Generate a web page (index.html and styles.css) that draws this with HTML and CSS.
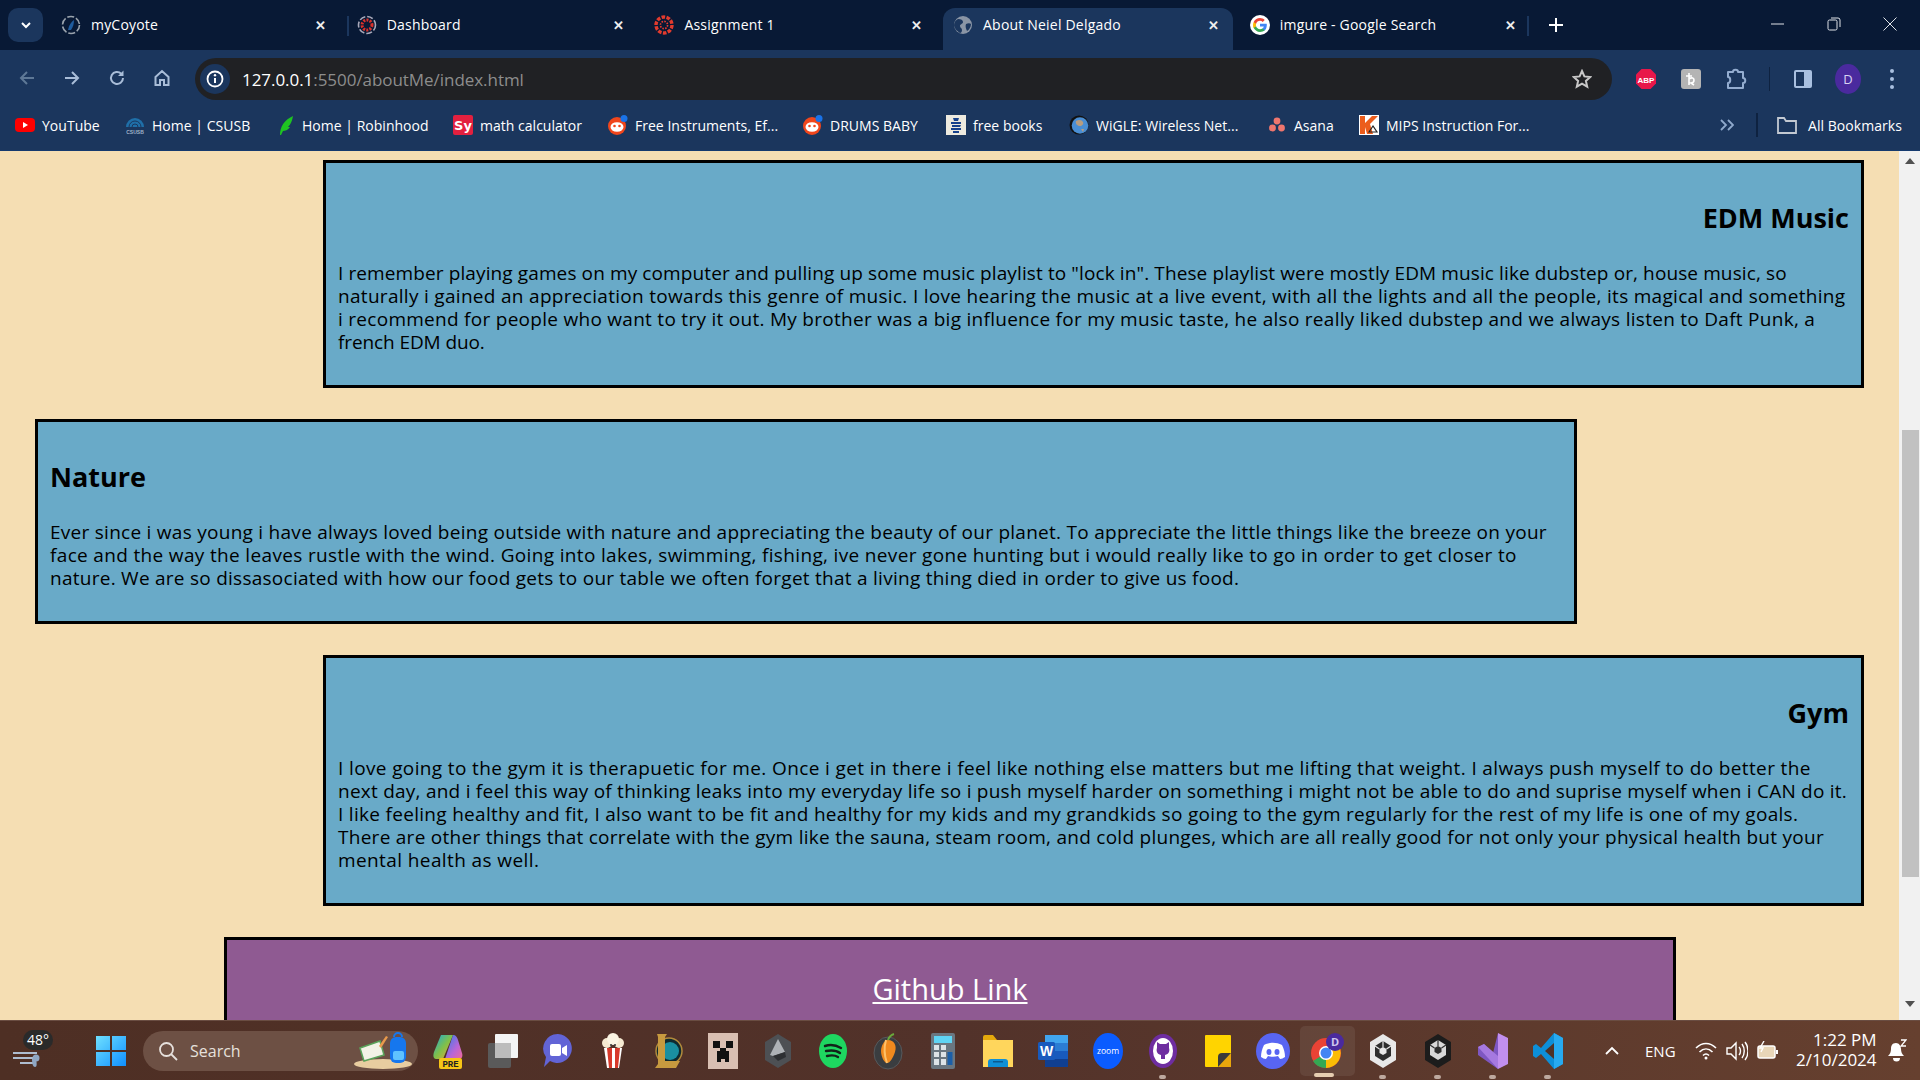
FILE: index.html
```html
<!DOCTYPE html>
<html lang="en">
<head>
<meta charset="utf-8">
<title>About Neiel Delgado</title>
<link rel="stylesheet" href="styles.css">
</head>
<body>
<div class="screen">
  <header class="chrome">
    <div class="tabstrip">
      <div class="tabmenu"><svg width="12" height="12" viewBox="0 0 12 12"><path d="M2 4l4 4 4-4" fill="none" stroke="#fff" stroke-width="2"/></svg></div>
      <div class="tab">
        <svg class="fav" viewBox="0 0 20 20"><circle cx="10" cy="10" r="8.5" fill="none" stroke="#9aa3ad" stroke-width="1.6" stroke-dasharray="7 2"/><path d="M7 15c1-5 3-8 6-10 0 4-1 7-3 10z" fill="#1f5c9e"/></svg>
        <span class="tabtitle">myCoyote</span><span class="tabx">✕</span>
      </div>
      <div class="tab sep">
        <svg class="fav" viewBox="0 0 20 20"><circle cx="10" cy="10" r="8.5" fill="none" stroke="#aab" stroke-width="1.6" stroke-dasharray="6 2"/><circle cx="10" cy="10" r="5" fill="none" stroke="#d9312b" stroke-width="3" stroke-dasharray="2 1.2"/></svg>
        <span class="tabtitle">Dashboard</span><span class="tabx">✕</span>
      </div>
      <div class="tab third">
        <svg class="fav" viewBox="0 0 20 20"><circle cx="10" cy="10" r="8" fill="none" stroke="#e23b2e" stroke-width="3.4" stroke-dasharray="3.6 1.4"/><circle cx="10" cy="10" r="3.6" fill="none" stroke="#e23b2e" stroke-width="1.6" stroke-dasharray="1.6 1.2"/></svg>
        <span class="tabtitle">Assignment 1</span><span class="tabx">✕</span>
      </div>
      <div class="tab active">
        <svg class="fav" viewBox="0 0 20 20"><circle cx="10" cy="10" r="9" fill="#8a95a5"/><path d="M5 4c3 0 5 1 5 3s-3 2-3 4 2 2 2 4-1 3-2 3C4 16 1 13 1 10c0-3 2-5 4-6zM13 9c2-1 4-1 5 0 0 3-2 6-4 7-1-2-2-5-1-7z" fill="#1b365d"/></svg>
        <span class="tabtitle">About Neiel Delgado</span><span class="tabx">✕</span>
      </div>
      <div class="tab">
        <svg class="fav" viewBox="0 0 20 20"><circle cx="10" cy="10" r="10" fill="#fff"/><path d="M16.8 10.2c0-.5 0-1-.1-1.4H10v2.7h3.8c-.2.9-.7 1.6-1.4 2.1v1.8h2.3c1.3-1.2 2.1-3 2.1-5.2z" fill="#4285f4"/><path d="M10 17c1.900 0 3.500-.6 4.700-1.700l-2.300-1.800c-.6.4-1.400.7-2.400.7-1.800 0-3.400-1.200-3.900-2.900H3.700v1.800C4.900 15.500 7.300 17 10 17z" fill="#34a853"/><path d="M6.100 11.300c-.3-.8-.3-1.800 0-2.600V6.900H3.700c-.9 1.900-.9 4.300 0 6.200z" fill="#fbbc05"/><path d="M10 5.800c1 0 2 .4 2.700 1.100l2-2C13.500 3.700 11.800 3 10 3 7.300 3 4.900 4.500 3.700 6.900l2.400 1.800C6.600 7 8.200 5.800 10 5.800z" fill="#ea4335"/></svg>
        <span class="tabtitle">imgure - Google Search</span><span class="tabx">✕</span>
      </div>
      <div class="newtab"><svg width="14" height="14" viewBox="0 0 14 14"><path d="M7 0v14M0 7h14" stroke="#fff" stroke-width="2"/></svg></div>
      <div class="winctl">
        <svg class="winbtn" width="14" height="14" viewBox="0 0 14 14"><path d="M0 7h13" stroke="#dfe3e8" stroke-width="1"/></svg>
        <svg class="winbtn" width="14" height="14" viewBox="0 0 14 14"><rect x="1" y="3" width="9" height="10" rx="1.500" fill="none" stroke="#dfe3e8"/><path d="M4 1h7a2 2 0 0 1 2 2v7" fill="none" stroke="#dfe3e8"/></svg>
        <svg class="winbtn" width="14" height="14" viewBox="0 0 14 14"><path d="M.5.5l13 13M13.500.5l-13 13" stroke="#dfe3e8"/></svg>
      </div>
    </div>
    <div class="toolbar">
      <div class="navs">
        <svg width="18" height="18" viewBox="0 0 18 18"><path d="M16 9H3M9 3L3 9l6 6" fill="none" stroke="#5e7896" stroke-width="2"/></svg>
        <svg width="18" height="18" viewBox="0 0 18 18"><path d="M2 9h13M9 3l6 6-6 6" fill="none" stroke="#a9bdd8" stroke-width="2"/></svg>
        <svg width="18" height="18" viewBox="0 0 18 18"><path d="M15 9a6 6 0 1 1-1.800-4.300" fill="none" stroke="#a9bdd8" stroke-width="2"/><path d="M15.500 1.500v5.500H10z" fill="#a9bdd8"/></svg>
        <svg width="18" height="18" viewBox="0 0 18 18"><path d="M2.500 8L9 2l6.500 6v8h-4.500v-5h-4v5H2.500z" fill="none" stroke="#a9bdd8" stroke-width="2"/></svg>
      </div>
      <div class="omnibox">
        <div class="infochip"><svg width="18" height="18" viewBox="0 0 18 18"><circle cx="9" cy="9" r="7.500" fill="none" stroke="#fff" stroke-width="1.800"/><path d="M9 8v5" stroke="#fff" stroke-width="2"/><circle cx="9" cy="5.300" r="1.200" fill="#fff"/></svg></div>
        <span class="url"><span class="urlhost">127.0.0.1</span>:5500/aboutMe/index.html</span>
        <svg class="star" width="20" height="20" viewBox="0 0 20 20"><path d="M10 2l2.400 5.400 5.900.6-4.400 3.900 1.300 5.800L10 14.700l-5.200 3 1.300-5.800L1.700 8l5.900-.6z" fill="none" stroke="#c8c8c8" stroke-width="2"/></svg>
      </div>
      <div class="exts">
        <svg class="ext" width="22" height="22" viewBox="0 0 22 22"><path d="M6.500 1h9L21 6.500v9L15.500 21h-9L1 15.500v-9z" fill="#e8174a"/><text x="11" y="14.500" class="abp">ABP</text></svg>
        <svg class="ext" width="22" height="22" viewBox="0 0 22 22"><rect x="1" y="1" width="20" height="20" rx="3" fill="#b4b4b4"/><path d="M9 5v12M9 11c3-2 5-1 5 1s-1 3-3 3l3 2M6 8h6" fill="none" stroke="#fff" stroke-width="1.600"/></svg>
        <svg class="ext" width="22" height="22" viewBox="0 0 22 22"><path d="M3 4h5c0-3 5-3 5 0h5v6c3 0 3 5 0 5v5H3v-5c3 0 3-6 0-6z" fill="none" stroke="#94add0" stroke-width="2" stroke-linejoin="round"/></svg>
        <i class="toolsep"></i>
        <svg class="ext panel" width="20" height="20" viewBox="0 0 20 20"><rect x="1" y="1" width="18" height="18" rx="2" fill="#a9c0e0"/><rect x="3" y="3" width="8" height="14" fill="#1b365d"/></svg>
        <div class="avatar">D</div>
        <svg class="dots" width="6" height="22" viewBox="0 0 6 22"><circle cx="3" cy="3" r="2" fill="#a9c0e0"/><circle cx="3" cy="11" r="2" fill="#a9c0e0"/><circle cx="3" cy="19" r="2" fill="#a9c0e0"/></svg>
      </div>
    </div>
    <div class="bookmarks">
      <div class="bm"><svg class="bmi" viewBox="0 0 20 20"><rect y="3" width="20" height="14" rx="4" fill="#f00"/><path d="M8 7l5 3-5 3z" fill="#fff"/></svg><span>YouTube</span></div>
      <div class="bm"><svg class="bmi" viewBox="0 0 20 20"><path d="M1 12a9 9 0 0 1 18 0z" fill="#1f6fa8"/><path d="M4 12a6 6 0 0 1 12 0M7 12a3 3 0 0 1 6 0" fill="none" stroke="#1b365d"/><text x="10" y="19" class="csusb">CSUSB</text></svg><span>Home | CSUSB</span></div>
      <div class="bm tight"><svg class="bmi" viewBox="0 0 20 20"><path d="M3 20c0-8 4-15 13-19-1 5-2 8-5 11l2 0c-2 3-5 4-7 4l-2 4z" fill="#1fc422"/></svg><span>Home | Robinhood</span></div>
      <div class="bm"><svg class="bmi" viewBox="0 0 20 20"><rect width="20" height="20" rx="2" fill="#e3203f"/><text x="10" y="15" class="sy">Sy</text></svg><span>math calculator</span></div>
      <div class="bm"><svg class="bmi" viewBox="0 0 20 20"><use href="#reddit"/></svg><span>Free Instruments, Ef...</span></div>
      <div class="bm"><svg class="bmi" viewBox="0 0 20 20"><use href="#reddit"/></svg><span>DRUMS BABY</span></div>
      <div class="bm"><svg class="bmi" viewBox="0 0 20 20"><rect width="20" height="20" fill="#edeadf"/><path d="M7 3h6l-1 3H8zM5 7h10v2H5zM6 10h9l-1 2H6zM5 13h10v2H5zM7 16h6v2H7z" fill="#17418c"/></svg><span>free books</span></div>
      <div class="bm"><svg class="bmi" viewBox="0 0 20 20"><circle cx="10" cy="10" r="9.500" fill="#111"/><circle cx="11" cy="10.500" r="8.300" fill="#4a8ed3"/><path d="M7 6c3-2 6-1 7 1s-1 4-3 4-5-2-4-5zM12 14l3 0-1 3z" fill="#b79d80"/></svg><span>WiGLE: Wireless Net...</span></div>
      <div class="bm"><svg class="bmi" viewBox="0 0 20 20"><circle cx="10" cy="6" r="3.400" fill="#f0766e"/><circle cx="5.500" cy="13" r="3.400" fill="#f0766e"/><circle cx="14.500" cy="13" r="3.400" fill="#f0766e"/></svg><span>Asana</span></div>
      <div class="bm"><svg class="bmi" viewBox="0 0 20 20"><rect width="20" height="20" fill="#fff"/><path d="M1 1h5v7l7-7h6l-8 8 3 10H8L6 12v7H1z" fill="#ec5d1c"/><path d="M10 17l4-6 4 6z" fill="none" stroke="#222" stroke-width="1.200"/></svg><span>MIPS Instruction For...</span></div>
      <div class="bmend">
        <svg width="14" height="12" viewBox="0 0 14 12"><path d="M1 1l5 5-5 5M8 1l5 5-5 5" fill="none" stroke="#8fa9cc" stroke-width="1.800"/></svg>
        <i class="bmsep"></i>
        <svg width="20" height="18" viewBox="0 0 20 18"><path d="M1 2h6l2 3h10v12H1z" fill="none" stroke="#c3c9d2" stroke-width="1.800"/></svg>
        <span>All Bookmarks</span>
      </div>
    </div>
  </header>

  <svg class="defs" width="0" height="0"><defs><g id="reddit"><circle cx="9" cy="11" r="9" fill="#f0461c"/><ellipse cx="9" cy="12" rx="6.500" ry="4.800" fill="#fff"/><circle cx="6.500" cy="11" r="1.300" fill="#f0461c"/><circle cx="11.500" cy="11" r="1.300" fill="#f0461c"/><circle cx="16" cy="3.500" r="3.500" fill="#1a73e8"/></g></defs></svg>

  <div class="viewport">
    <main class="page">
      <section class="card right">
        <h2 class="cardtitle">EDM Music</h2>
        <p class="cardtext"><span class="ls-11">I remember playing games on my computer and pulling up some music playlist to "lock in". These playlist were mostly EDM music like dubstep or, house music, so</span><br>naturally i gained an appreciation towards this genre of music. I love hearing the music at a live event, with all the lights and all the people, its magical and something<br><span class="ls-28">i recommend for people who want to try it out. My brother was a big influence for my music taste, he also really liked dubstep and we always listen to Daft Punk, a</span><br><span class="ls-00">french EDM duo.</span></p>
      </section>
      <section class="card left">
        <h2 class="cardtitle">Nature</h2>
        <p class="cardtext"><span class="ls-27">Ever since i was young i have always loved being outside with nature and appreciating the beauty of our planet. To appreciate the little things like the breeze on your</span><br><span class="ls-34">face and the way the leaves rustle with the wind. Going into lakes, swimming, fishing, ive never gone hunting but i would really like to go in order to get closer to</span><br><span class="ls-26">nature. We are so dissasociated with how our food gets to our table we often forget that a living thing died in order to give us food.</span></p>
      </section>
      <section class="card right">
        <h2 class="cardtitle">Gym</h2>
        <p class="cardtext"><span class="ls-37">I love going to the gym it is therapuetic for me. Once i get in there i feel like nothing else matters but me lifting that weight. I always push myself to do better the</span><br><span class="ls-24">next day, and i feel this way of thinking leaks into my everyday life so i push myself harder on something i might not be able to do and suprise myself when i CAN do it.</span><br>I like feeling healthy and fit, I also want to be fit and healthy for my kids and my grandkids so going to the gym regularly for the rest of my life is one of my goals.<br><span class="ls-27">There are other things that correlate with the gym like the sauna, steam room, and cold plunges, which are all really good for not only your physical health but your</span><br><span class="ls-40">mental health as well.</span></p>
      </section>
      <section class="linkcard"><a class="ghlink" href="#">Github Link</a></section>
    </main>
    <div class="scrollbar">
      <svg class="sarrow" width="10" height="6" viewBox="0 0 10 6"><path d="M5 0l5 6H0z" fill="#505050"/></svg>
      <div class="thumb"></div>
      <svg class="sarrow down" width="10" height="6" viewBox="0 0 10 6"><path d="M5 6L0 0h10z" fill="#505050"/></svg>
    </div>
  </div>

  <footer class="taskbar">
    <div class="weather">
      <svg width="36" height="24" viewBox="0 0 36 24"><path d="M1 9h24M1 14h24M8 19h16" stroke="#aebdd0" stroke-width="2.200"/><circle cx="24" cy="14" r="3.500" fill="#8fa7c4"/><path d="M20 15c0 5 1 8 3 8s2-3 1-8z" fill="#8fa7c4"/></svg>
      <span class="temp">48°</span>
    </div>
    <div class="ti start"><svg width="30" height="30" viewBox="0 0 30 30"><defs><linearGradient id="win" x1="0" y1="0" x2="1" y2="1"><stop offset="0" stop-color="#6fe0ff"/><stop offset="1" stop-color="#0f8fff"/></linearGradient></defs><path d="M0 0h14v14H0zM16 0h14v14H16zM0 16h14v14H0zM16 16h14v14H16z" fill="url(#win)"/></svg></div>
    <div class="search">
      <svg width="20" height="20" viewBox="0 0 20 20"><circle cx="8.500" cy="8.500" r="6.500" fill="none" stroke="#e6e0dc" stroke-width="1.800"/><path d="M13 13l6 6" stroke="#e6e0dc" stroke-width="1.800"/></svg>
      <span class="searchtext">Search</span>
      <svg class="searchart" width="60" height="40" viewBox="0 0 60 40"><ellipse cx="30" cy="33" rx="29" ry="5" fill="#e8cda0"/><path d="M7 17l20-7 4 14-20 6z" fill="#f3f2e6" stroke="#5aa35a" stroke-width="1.500"/><path d="M26 15l7-10 2 1-7 11z" fill="#e99a4c"/><rect x="37" y="6" width="16" height="26" rx="6" fill="#1677ee"/><rect x="40" y="20" width="11" height="9" rx="2" fill="#5fc3ff"/><path d="M41 6a4 4 0 0 1 8 0" fill="none" stroke="#1677ee" stroke-width="2"/></svg>
    </div>
    <div class="tis">
      <div class="ti"><svg width="30" height="36" viewBox="0 0 30 36"><defs><linearGradient id="cop" x1="0" y1="0" x2="1" y2="1"><stop offset="0" stop-color="#18a8e0"/><stop offset=".5" stop-color="#7fc04a"/><stop offset="1" stop-color="#f0a63c"/></linearGradient><linearGradient id="cop2" x1="0" y1="0" x2="1" y2="1"><stop offset="0" stop-color="#2a7fe8"/><stop offset=".6" stop-color="#b866d8"/><stop offset="1" stop-color="#f06a9a"/></linearGradient></defs><path d="M8 2h12L10 26H3C0 26 0 22 1 19z" fill="url(#cop)"/><path d="M20 2c3 0 4 2 5 5l4 13c1 3 0 6-3 6H12z" fill="url(#cop2)"/><rect x="6" y="25" width="23" height="11" rx="2" fill="#f7c516"/><text x="17.500" y="34" class="pre">PRE</text></svg></div>
      <div class="ti"><svg width="30" height="34" viewBox="0 0 30 34"><rect x="7" y="0" width="23" height="24" rx="1" fill="#f4f4f4"/><rect x="0" y="9" width="23" height="25" rx="2" fill="#5a5a5a"/><rect x="7" y="9" width="16" height="15" fill="#bcbcbc"/></svg></div>
      <div class="ti"><svg width="30" height="36" viewBox="0 0 30 36"><path d="M15 1a14.500 14.500 0 1 1-8 27l-6 6 2-10A14.500 14.500 0 0 1 15 1z" fill="#6264d6"/><rect x="7" y="11" width="11" height="12" rx="2" fill="#fff"/><path d="M19 15l5-3v11l-5-3z" fill="#fff"/></svg></div>
      <div class="ti"><svg width="24" height="36" viewBox="0 0 24 36"><path d="M3 15h18l-3 20H6z" fill="#fff"/><path d="M6 15l2 20h3V15zM14 15v20h3l2-20z" fill="#d7392b"/><circle cx="6" cy="10" r="5" fill="#f6ead2"/><circle cx="18" cy="10" r="5" fill="#f6ead2"/><circle cx="12" cy="6" r="6" fill="#fbf4e3"/><circle cx="10" cy="12" r="1" fill="#333"/><circle cx="14" cy="12" r="1" fill="#333"/></svg></div>
      <div class="ti"><svg width="30" height="36" viewBox="0 0 30 36"><circle cx="16" cy="18" r="13" fill="#0f2a30" stroke="#b08a3c" stroke-width="1.500"/><circle cx="17" cy="18" r="9" fill="#1a8fa0"/><path d="M4 1h10l-2 3v24h15l-4 7H2l3-4V4z" fill="#c79a3f"/></svg></div>
      <div class="ti"><svg width="30" height="36" viewBox="0 0 30 36"><rect y="0" width="30" height="36" fill="#d9bfb2"/><path d="M5 8h7v7H5zM18 8h7v7h-7zM12 15h6v3h3v11h-4v-3h-4v3H9V18h3z" fill="#111"/></svg></div>
      <div class="ti"><svg width="26" height="34" viewBox="0 0 26 34"><path d="M13 0l13 8v18l-13 8L0 26V8z" fill="#4d5054"/><path d="M13 5l7 13-12 4-3-1z" fill="#aeb2b6"/><path d="M8 22l12-4 1 5-8 4z" fill="#2e3033"/></svg></div>
      <div class="ti"><svg width="28" height="34" viewBox="0 0 28 34"><ellipse cx="14" cy="17" rx="14" ry="17" fill="#1ed760"/><path d="M6 12c6-2 11-1 16 2M7 17c5-1 10-1 14 2M8 22c4-1 8-1 11 1" fill="none" stroke="#12231a" stroke-width="2.400" stroke-linecap="round"/></svg></div>
      <div class="ti"><svg width="30" height="38" viewBox="0 0 30 38"><ellipse cx="15" cy="21" rx="14" ry="16" fill="#3a3d40" stroke="#57595c"/><path d="M15 8c6 0 9 5 7 12-2 6-5 11-8 11s-6-7-6-12 3-11 7-11z" fill="#f08a1e"/><path d="M13 8c-2 7-2 15 1 23" stroke="#ffc168" stroke-width="2" fill="none"/><path d="M15 8c1-3 3-5 6-6" stroke="#6aa83c" stroke-width="2" fill="none"/></svg></div>
      <div class="ti"><svg width="24" height="36" viewBox="0 0 24 36"><rect width="24" height="36" rx="2" fill="#6a7680"/><rect x="3" y="3" width="18" height="7" fill="#5fd4f4"/><path d="M3 12h5v5H3zM10 12h5v5h-5zM3 19h5v5H3zM10 19h5v5h-5zM3 26h5v6H3zM10 26h5v6h-5z" fill="#dde3e7"/><rect x="16.500" y="19" width="5" height="13" fill="#1b5fa8"/></svg></div>
      <div class="ti"><svg width="30" height="32" viewBox="0 0 30 32"><path d="M0 2a2 2 0 0 1 2-2h8l4 5h16v27H0z" fill="#e4a80c"/><rect y="5" width="30" height="27" fill="#ffd65c"/><path d="M5 32v-5a3 3 0 0 1 3-3h14a3 3 0 0 1 3 3v5z" fill="#0f8fd6"/><rect x="10" y="26" width="10" height="1.500" fill="#0a5a90"/></svg></div>
      <div class="ti"><svg width="30" height="32" viewBox="0 0 30 32"><rect x="7" y="0" width="23" height="32" rx="2" fill="#2b7cd3"/><path d="M7 0h23v8H7z" fill="#41a5ee"/><path d="M7 16h23v8H7z" fill="#185abd"/><path d="M7 24h23v8H7z" fill="#103f91"/><rect y="7" width="17" height="18" rx="1.500" fill="#185abd"/><text x="8.500" y="21" class="wordw">W</text></svg></div>
      <div class="ti"><svg width="30" height="36" viewBox="0 0 30 36"><ellipse cx="15" cy="18" rx="15" ry="18" fill="#0b5cff"/><text x="15" y="20.500" class="zoomt">zoom</text></svg></div>
      <div class="ti run"><svg width="28" height="34" viewBox="0 0 28 34"><ellipse cx="14" cy="17" rx="14" ry="17" fill="#6e2da0"/><ellipse cx="14" cy="17" rx="10" ry="13" fill="#fff"/><path d="M8 8l3 2h6l3-2v6c1 3 0 6-4 7v4h-4v-4c-4-1-5-4-4-7z" fill="#6e2da0"/></svg></div>
      <div class="ti"><svg width="26" height="32" viewBox="0 0 26 32"><rect width="26" height="32" rx="1" fill="#ffd400"/><path d="M13 32l13-14v14z" fill="#e8a70c"/><path d="M13 32V22a4 4 0 0 1 4-4h9z" fill="#3a3a3a"/></svg></div>
      <div class="ti"><svg width="34" height="36" viewBox="0 0 34 36"><ellipse cx="17" cy="18" rx="17" ry="18" fill="#5865f2"/><path d="M8 12c6-3 12-3 18 0 2 4 3 8 3 12-2 1-3 2-5 2l-2-3c-3 1-7 1-10 0l-2 3c-2 0-3-1-5-2 0-4 1-8 3-12z" fill="#fff"/><ellipse cx="13" cy="19" rx="2.500" ry="3" fill="#5865f2"/><ellipse cx="21" cy="19" rx="2.500" ry="3" fill="#5865f2"/></svg></div>
      <div class="ti active"><svg width="34" height="36" viewBox="0 0 34 36"><circle cx="15" cy="20" r="15" fill="#ea4335"/><path d="M15 20L2 28a15 15 0 0 0 13 7z" fill="#34a853"/><path d="M15 20l13-7a15 15 0 0 1-13 22z" fill="#fbbc05"/><circle cx="15" cy="20" r="7" fill="#fff"/><circle cx="15" cy="20" r="5.500" fill="#4285f4"/><circle cx="24" cy="9" r="9" fill="#4a2a9e"/><text x="24" y="13" class="avatart">D</text></svg></div>
      <div class="ti run"><svg width="26" height="34" viewBox="0 0 26 34"><path d="M13 0l13 8v18l-13 8L0 26V8z" fill="#e8e8e8"/><path d="M13 7l8 5v10l-8 5-8-5V12z" fill="#2e2e2e"/><path d="M13 13l3.500 2v4L13 21l-3.500-2v-4z" fill="#e8e8e8"/><path d="M13 7v6M5 12l4.500 3M21 12l-4.500 3" stroke="#e8e8e8" stroke-width="1.200"/></svg></div>
      <div class="ti run"><svg width="26" height="34" viewBox="0 0 26 34"><path d="M13 0l13 8v18l-13 8L0 26V8z" fill="#1c1c1c"/><path d="M13 6l8 5v10l-8 5-8-5V11z" fill="#d8d8d8"/><path d="M13 12l3.500 2v4L13 20l-3.500-2v-4z" fill="#2e2e2e"/><path d="M13 6v6M5 11l4.500 3M21 11l-4.500 3" stroke="#2e2e2e" stroke-width="1.200"/></svg></div>
      <div class="ti run"><svg width="30" height="36" viewBox="0 0 30 36"><path d="M20 0l10 5v26l-10 5z" fill="#c18fee"/><path d="M20 0v36L0 22V14l6-3 9 9z" fill="#7e57c2"/><path d="M0 14l20 22V23L6 11z" fill="#a679e0"/></svg></div>
      <div class="ti run"><svg width="30" height="36" viewBox="0 0 30 36"><path d="M21 0l9 5v26l-9 5L8 21l-5 4-3-2v-10l3-2 5 4z" fill="#0d8fd8"/><path d="M21 0l9 5v26l-9 5z" fill="#27aaf0"/><path d="M21 10L12 18l9 8z" fill="#4f3227"/></svg></div>
    </div>
    <div class="tray">
      <svg class="caret" width="16" height="10" viewBox="0 0 16 10"><path d="M2 8l6-6 6 6" fill="none" stroke="#fff" stroke-width="1.800"/></svg>
      <span class="eng">ENG</span>
      <svg class="tr wifi" width="22" height="18" viewBox="0 0 22 18"><path d="M1 6c6-6 14-6 20 0M4.500 10c4-4 9-4 13 0M8 13.500c2-2 4-2 6 0" fill="none" stroke="#fff" stroke-width="1.600"/><circle cx="11" cy="16" r="1.500" fill="#fff"/></svg>
      <svg class="tr vol" width="22" height="20" viewBox="0 0 22 20"><path d="M1 7h4l5-5v16l-5-5H1z" fill="none" stroke="#fff" stroke-width="1.400"/><path d="M13 6c2 2 2 6 0 8M16 3c3 4 3 10 0 14M19 1c4 5 4 13 0 18" fill="none" stroke="#fff" stroke-width="1.400"/></svg>
      <svg class="tr bat" width="22" height="20" viewBox="0 0 22 20"><rect x="1" y="5" width="17" height="12" rx="2" fill="#e8d6b8" stroke="#fff" stroke-width="1.500"/><rect x="19" y="9" width="2" height="4" fill="#fff"/><path d="M7 0L3 7h3l-2 4" fill="none" stroke="#fff" stroke-width="1.400"/></svg>
      <div class="clock"><span>1:22 PM</span><span>2/10/2024</span></div>
      <svg class="bell" width="20" height="24" viewBox="0 0 20 24"><path d="M9 4c-4 0-5 3-5 6 0 3-1 5-3 7h16c-2-2-3-4-3-7 0-3-2-6-5-6z" fill="#fff"/><path d="M6 19h7a3.500 3.500 0 0 1-7 0z" fill="#fff"/><path d="M14 1h5l-5 6h5" fill="none" stroke="#fff" stroke-width="1.300"/></svg>
    </div>
  </footer>
</div>
</body>
</html>
```
FILE: styles.css
```css
* { box-sizing: border-box; }
html, body { margin: 0; height: 100%; overflow: hidden; }
body { font-family: "Open Sans", "Noto Sans", sans-serif; }
.screen { width: 1920px; height: 1080px; display: flex; flex-direction: column; overflow: hidden; }
.defs { position: absolute; }

/* Chrome */
.chrome { flex: none; height: 151px; background: #1b365d; color: #fff; font-size: 14px; border-bottom: 1px solid #153a6e; }
.tabstrip { height: 50px; background: #081935; display: flex; align-items: stretch; padding-top: 8px; position: relative; }
.tabmenu { width: 35px; height: 34px; margin-left: 8px; margin-right: 7px; border-radius: 10px; background: #1b365d; display: flex; align-items: center; justify-content: center; }
.tab { width: 297.700px; padding: 0 20px 8px 11px; display: flex; align-items: center; position: relative; }
.tab .fav { width: 20px; height: 20px; flex: none; margin-right: 10px; }
.tab.sep, .tab.third { padding-left: 9px; }
.tab.sep::before { content: ""; position: absolute; left: -1px; top: 8px; height: 20px; width: 2px; background: #1b365d; }
.tab.active { background: #1b365d; border-radius: 12px 12px 0 0; margin-left: 0; margin-right: 0; padding: 0 13px 8px 10px; width: 290px; }
.tabtitle { flex: 1; white-space: nowrap; letter-spacing: .2px; line-height: 34px; }
.tabx { font-size: 13px; font-weight: 700; color: #eee; width: 14px; text-align: center; }
.tab.active + .tab { margin-left: 7.700px; padding-left: 9px; padding-right: 21px; }
.newtab { margin-left: 11px; padding-top: 9px; position: relative; }
.newtab::before { content: ""; position: absolute; left: -22px; top: 8px; height: 20px; width: 2px; background: #1b365d; }
.winctl { margin-left: auto; padding: 9px 23px 0 0; display: flex; gap: 42px; }
.winbtn { flex: none; }

.toolbar { height: 50px; display: flex; align-items: flex-start; padding-top: 8px; }
.navs { width: 195px; height: 42px; padding-left: 18px; display: flex; align-items: center; gap: 27px; padding-bottom: 2px; }
.omnibox { width: 1417px; height: 42px; border-radius: 21px; background: #202124; display: flex; align-items: center; padding: 0 20px 0 5px; }
.infochip { width: 30px; height: 30px; border-radius: 50%; background: #1b365d; display: flex; align-items: center; justify-content: center; }
.url { margin-left: 12px; font-size: 17px; color: #8d8d8d; white-space: nowrap; letter-spacing: -.05px; }
.urlhost { color: #fff; }
.star { margin-left: auto; }
.exts { flex: 1; height: 42px; display: flex; align-items: center; padding-left: 23px; position: relative; }
.ext { flex: none; margin-right: 23px; }
.toolsep { width: 1px; height: 24px; background: #0e2240; margin-right: 23px; margin-left: -1px; }
.avatar { width: 26px; height: 30px; border-radius: 50%; background: #4a2a9e; color: #d9d2f3; font-size: 13px; display: flex; align-items: center; justify-content: center; margin-left: -1px; }
.dots { margin-left: 28px; }
.abp { font: 700 8px "Liberation Sans", sans-serif; fill: #fff; text-anchor: middle; }
.csusb { font: 700 5px "Liberation Sans", sans-serif; fill: #9fb3c8; text-anchor: middle; }
.sy { font: 700 13px "DejaVu Sans", sans-serif; fill: #fff; text-anchor: middle; }
.pre { font: 700 9px "Liberation Mono", monospace; fill: #222; text-anchor: middle; }
.wordw { font: 700 14px "Liberation Sans", sans-serif; fill: #fff; text-anchor: middle; }
.zoomt { font: 400 8.500px "Open Sans", sans-serif; fill: #fff; text-anchor: middle; }
.avatart { font: 700 11px "Open Sans", sans-serif; fill: #cfc6ee; text-anchor: middle; }

.bookmarks { height: 50px; display: grid; grid-template-columns: 110px 152px 176px 155px 195px 143px 123px 198px 92px 361px 1fr; padding-left: 15px; align-items: center; }
.bm { display: flex; align-items: center; gap: 7px; white-space: nowrap; letter-spacing: .02px; }
.bm.tight { gap: 5px; }
.bmi { width: 20px; height: 20px; flex: none; }
.bmend { display: flex; align-items: center; white-space: nowrap; }
.bmsep { width: 2px; height: 24px; background: #0e2240; margin: 0 19px 0 22px; }
.bmend span { margin-left: 11px; letter-spacing: .05px; }

/* Page */
.viewport { flex: 1; min-height: 0; display: flex; background: #f5deb3; overflow: hidden; }
.page { flex: 1; min-width: 0; padding-top: 9px; font-family: "Open Sans", "Noto Sans", sans-serif; }
.card { background: #69aac8; border: 3px solid #000; padding: 12px; margin-bottom: 31px; color: #000; }
.card.right { margin-left: 323px; margin-right: 35px; }
.card.left { margin-left: 35px; margin-right: 322px; }
.card.right .cardtitle { text-align: right; }
.cardtitle { margin: 26px 0 0; font-size: 27px; line-height: 34px; font-weight: 700; }
.cardtext { margin: 27px 0 19px; font-size: 19px; line-height: 23px; white-space: nowrap; letter-spacing: .3px; }
.ls-00 { letter-spacing: -.1px; }
.ls-11 { letter-spacing: .11px; }
.ls-24 { letter-spacing: .24px; }
.ls-26 { letter-spacing: .26px; }
.ls-27 { letter-spacing: .27px; }
.ls-28 { letter-spacing: .28px; }
.ls-34 { letter-spacing: .34px; }
.ls-37 { letter-spacing: .37px; }
.ls-40 { letter-spacing: .4px; }
.linkcard { margin: 0 223px 0 224px; height: 120px; background: #8f5a92; border: 3px solid #000; text-align: center; padding-top: 30px; }
.ghlink { color: #fff; font-size: 29px; line-height: 38px; }
.scrollbar { flex: none; width: 21px; background: #f1f1f1; display: flex; flex-direction: column; align-items: center; padding: 7px 0 0 2px; }
.sarrow { flex: none; margin-right: 2px; }
.thumb { width: 17px; height: 447px; background: #c1c1c1; margin-top: 266px; }
.sarrow.down { margin-top: 124px; }

/* Taskbar */
.taskbar { flex: none; height: 60px; background: linear-gradient(90deg, #4e2f24, #52322a 50%, #66402f); border-top: 1px solid #6a4d42; display: flex; align-items: center; color: #fff; }
.weather { width: 96px; flex: none; position: relative; padding-left: 12px; padding-top: 10px; display: flex; }
.temp { position: absolute; left: 23px; top: -4px; background: #2a2a2a; border-radius: 12px; font-size: 14px; line-height: 20px; padding: 0 4px; }
.ti { width: 55px; flex: none; display: flex; align-items: center; justify-content: center; height: 50px; position: relative; }
.start { width: 30px; }
.search { width: 275px; height: 40px; margin-left: 17px; border-radius: 20px; background: #6d5044; display: flex; align-items: center; padding-left: 15px; flex: none; position: relative; color: #e6e0dc; }
.searchtext { margin-left: 12px; font-size: 16px; }
.searchart { margin-left: auto; margin-right: 5px; }
.tis { display: flex; margin-left: 2px; flex: none; }
.ti.run::after { content: ""; position: absolute; bottom: -3px; left: 24px; width: 7px; height: 4px; border-radius: 2px; background: #bda99f; }
.ti.active { background: rgba(255,255,255,.07); border-radius: 5px; height: 50px; }
.ti.active::after { content: ""; position: absolute; bottom: -1px; left: 14px; width: 20px; height: 4px; border-radius: 2px; background: #e6cdb0; }
.tray { flex: 1; display: flex; align-items: center; padding-left: 29px; }
.caret { flex: none; }
.eng { margin-left: 25px; font-size: 15px; }
.tr { flex: none; }
.wifi { margin-left: 19px; }
.vol { margin-left: 9px; }
.bat { margin-left: 9px; }
.clock { display: flex; flex-direction: column; align-items: flex-end; width: 97px; margin-left: 1px; margin-top: -2px; font-size: 17px; line-height: 20px; white-space: nowrap; }
.bell { margin-left: 10px; flex: none; }
```
